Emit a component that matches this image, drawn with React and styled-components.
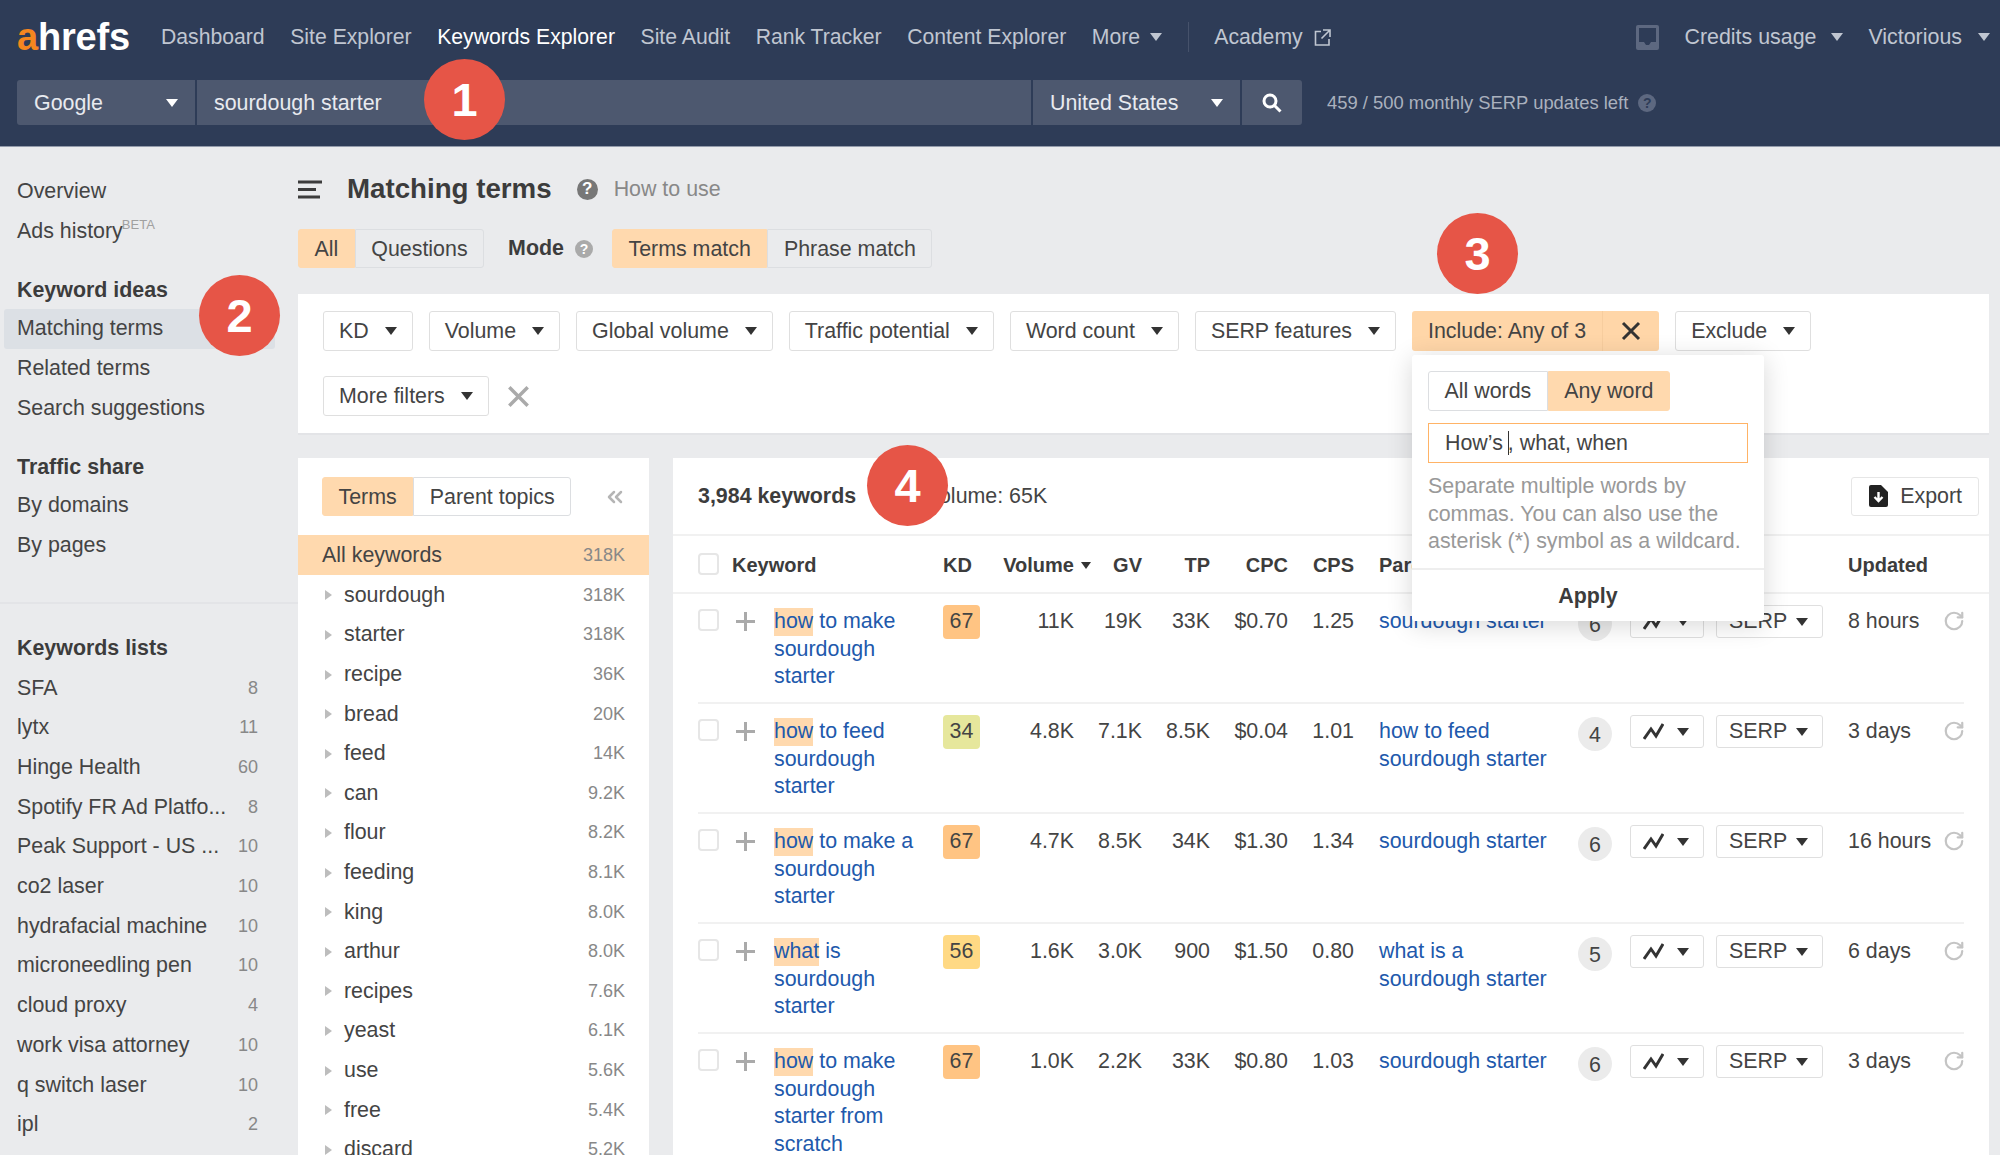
import React from "react";
import styled, { createGlobalStyle } from "styled-components";
import { ChevronsLeft, RotateCw } from "lucide-react";

const GlobalStyle = createGlobalStyle`
  html, body {
    margin: 0;
    padding: 0;
    background: #eaebed;
  }
  body {
    font-family: "Liberation Sans", Arial, sans-serif;
    font-size: 21.4px;
    color: #444;
  }
  * {
    box-sizing: border-box;
  }
`;

const Page = styled.div`
  position: relative;
  width: 2000px;
  height: 1155px;
  overflow: hidden;
  background: #eaebed;
`;

/* header */
const Header = styled.header`
  height: 147px;
  background: #2e3c57;
  border-bottom: 1px solid #939bab;
  padding: 0 10px 0 17px;
`;

const NavRow = styled.nav`
  height: 74px;
  margin-bottom: 6px;
  display: flex;
  align-items: center;
  gap: 25.6px;
  font-size: 21.2px;
`;

const Logo = styled.div`
  width: 118.4px;
  font-size: 38px;
  font-weight: 700;
  letter-spacing: -0.2px;
  color: #fff;
  line-height: 40px;
  span {
    color: #f5861f;
  }
`;

const NavLink = styled.span`
  display: flex;
  align-items: center;
  gap: ${({ $gap }) => $gap || 10}px;
  color: ${({ $active }) => ($active ? "#fff" : "#c0c6d1")};
  white-space: nowrap;
`;

const NavDivider = styled.div`
  width: 1px;
  height: 30px;
  background: #46526b;
`;

const NavRight = styled.div`
  margin-left: auto;
  display: flex;
  align-items: center;
  gap: 25px;
  font-size: 21.4px;
`;

const SearchRow = styled.div`
  display: flex;
  align-items: center;
  gap: 2px;
`;

const SearchCell = styled.div`
  height: 45px;
  display: flex;
  align-items: center;
  justify-content: space-between;
  padding: 1px ${({ $pad }) => $pad || 17}px 0;
  width: ${({ $w }) => ($w ? `${$w}px` : "auto")};
  background: #4d586f;
  color: #e8eaef;
  border-radius: ${({ $radius }) => $radius || "0"};
`;

const UpdatesNote = styled.div`
  display: flex;
  align-items: center;
  gap: 10px;
  margin-left: 23px;
  font-size: 18.400px;
  color: #aab1be;
`;

const Caret = styled.i`
  display: inline-block;
  flex: none;
  width: 0;
  height: 0;
  border-left: ${({ $size }) => $size || 6}px solid transparent;
  border-right: ${({ $size }) => $size || 6}px solid transparent;
  border-top: ${({ $size }) => ($size || 6) + 2}px solid ${({ $color }) => $color || "#333"};
  margin-right: ${({ $pull }) => $pull || 0}px;
`;

const HelpDot = styled.span`
  flex: none;
  display: inline-flex;
  align-items: center;
  justify-content: center;
  width: ${({ $size }) => $size || 18}px;
  height: ${({ $size }) => $size || 18}px;
  border-radius: 50%;
  background: ${({ $color }) => $color || "#aaa"};
  color: ${({ $text }) => $text || "#fff"};
  font-size: ${({ $size }) => ($size || 18) - 4}px;
  font-weight: 700;
`;

/* body layout */
const Body = styled.div`
  display: grid;
  grid-template-columns: 298px 1fr;
  height: 1008px;
`;

const Sidebar = styled.aside`
  padding-top: 25px;
`;

const SideItem = styled.div`
  height: ${({ $h }) => $h || 39.7}px;
  display: flex;
  align-items: center;
  justify-content: space-between;
  padding: 0 40px 0 ${({ $active }) => ($active ? 13 : 17)}px;
  margin-left: ${({ $active }) => ($active ? 4 : 0)}px;
  margin-right: ${({ $active }) => ($active ? 23 : 0)}px;
  background: ${({ $active }) => ($active ? "#dce0e5" : "transparent")};
  border-radius: 3px;
  white-space: nowrap;
`;

const SideHeading = styled(SideItem)`
  font-weight: 700;
  margin-top: ${({ $top }) => $top || 0}px;
  color: #3c3c3c;
`;

const Beta = styled.sup`
  font-size: 13px;
  color: #a0a0a0;
  align-self: flex-start;
  margin: -1px 0 0 -1px;
  line-height: 13px;
`;

const SideLabel = styled.span`
  display: flex;
`;

const SideCount = styled.span`
  font-size: 18px;
  color: #888;
`;

const SideDivider = styled.div`
  height: 2px;
  background: #e3e4e7;
  margin: 37px 0 25px;
`;

const Content = styled.main`
  padding: 22px 11px 0 0;
  min-width: 0;
`;

const TitleRow = styled.div`
  height: 40px;
  display: flex;
  align-items: center;
`;

const Title = styled.h1`
  margin: 0 25px 0 25px;
  font-size: 27.7px;
  font-weight: 700;
  color: #3c3c3c;
`;

const HowTo = styled.span`
  margin-left: 16px;
  color: #888;
`;

const ModeRow = styled.div`
  display: flex;
  align-items: center;
  height: 39px;
  margin-top: 20px;
`;

const ModeLabel = styled.b`
  margin: 0 11px 0 24px;
  color: #3c3c3c;
`;

const Segments = styled.div`
  display: flex;
  height: ${({ $h }) => $h || 39}px;
  margin-left: ${({ $left }) => $left || 0}px;
`;

const Segment = styled.div`
  display: flex;
  align-items: center;
  padding: 1px ${({ $pad }) => $pad || 15.5}px 0;
  border: 1px solid ${({ $active }) => ($active ? "#ffd9ae" : "#dcdee1")};
  background: ${({ $active, $plain }) => ($active ? "#ffd9ae" : $plain ? "#fff" : "transparent")};
  &:first-child {
    border-radius: 3px 0 0 3px;
  }
  &:last-child {
    border-radius: 0 3px 3px 0;
  }
`;

const FilterPanel = styled.section`
  position: relative;
  z-index: 2;
  margin-top: 26px;
  height: 141px;
  padding: 17px 25px;
  background: #fff;
  border-bottom: 2px solid #e3e4e7;
  display: flex;
  flex-wrap: wrap;
  align-items: center;
  align-content: flex-start;
  gap: 25px 16px;
`;

const FilterButton = styled.div`
  height: 40px;
  display: flex;
  align-items: center;
  gap: 16px;
  padding: 0 15px;
  background: #fff;
  border: 1px solid #dfdfdf;
  border-radius: 3px;
  white-space: nowrap;
`;

const ClearFilters = styled.span`
  display: flex;
  margin-left: 2px;
`;

const IncludeWrap = styled.div`
  position: relative;
`;

const IncludeButton = styled.div`
  height: 40px;
  display: flex;
  align-items: center;
  background: #ffd6a8;
  border-radius: 3px;
`;

const IncludeLabel = styled.span`
  padding: 0 16px;
  border-right: 1px solid #f7cd9e;
  line-height: 40px;
`;

const IncludeClose = styled.span`
  display: flex;
  padding: 0 18px;
`;

const Popover = styled.div`
  position: absolute;
  top: 44px;
  left: 0;
  width: 352px;
  height: 266px;
  background: #fff;
  border-radius: 3px;
  box-shadow: 0 4px 26px rgba(0, 0, 0, 0.16);
  z-index: 5;
`;

const PopTop = styled.div`
  padding: 16px 16px 0;
  height: 215px;
  border-bottom: 2px solid #eee;
`;

const PopInput = styled.div`
  margin-top: 12px;
  height: 40px;
  display: flex;
  align-items: center;
  padding-left: 16px;
  border: 1px solid #ffb366;
  white-space: pre;
`;

const Cursor = styled.i`
  display: inline-block;
  width: 1px;
  height: 24px;
  margin: 0 -1px 0 5px;
  background: #333;
`;

const PopHelp = styled.p`
  margin: 10px 0 0;
  line-height: 27.5px;
  color: #999;
  white-space: nowrap;
`;

const ApplyRow = styled.div`
  height: 51px;
  padding-top: 2px;
  display: flex;
  align-items: center;
  justify-content: center;
  font-weight: 700;
  color: #3c3c3c;
`;

const Panels = styled.div`
  margin-top: 23px;
  display: grid;
  grid-template-columns: 351px 1316px;
  gap: 24px;
  height: 697px;
`;

const TermsPanel = styled.section`
  background: #fff;
  padding-top: 19px;
  overflow: hidden;
`;

const TermsTop = styled.div`
  display: flex;
  align-items: center;
  justify-content: space-between;
  padding: 0 22px 0 24px;
  margin-bottom: 19px;
`;

const TermRow = styled.div`
  height: 39.6px;
  display: flex;
  align-items: center;
  justify-content: space-between;
  padding: 2px 24px 0;
  background: ${({ $active }) => ($active ? "#ffd9ae" : "transparent")};
`;

const TermName = styled.span`
  display: flex;
  align-items: center;
  gap: 12px;
  padding-left: 3px;
`;

const TermArrow = styled.i`
  width: 0;
  height: 0;
  border-top: 5px solid transparent;
  border-bottom: 5px solid transparent;
  border-left: 7px solid #bdbdbd;
`;

const TermCount = styled.span`
  font-size: 18px;
  color: #888;
`;

const TablePanel = styled.section`
  background: #fff;
  overflow: hidden;
`;

const TableTop = styled.div`
  height: 78px;
  display: flex;
  align-items: center;
  padding: 0 10px 0 25px;
  gap: 21px;
  border-bottom: 2px solid #f1f1f1;
`;

const Strong = styled.b`
  color: #3c3c3c;
`;

const ExportButton = styled(FilterButton)`
  margin-left: auto;
  height: 39px;
  gap: 12px;
  padding: 0 16px 0 17px;
  border-color: #e6e6e6;
`;

const columns = "38px 39px 168px 47px 84px 68px 68px 78px 66px 25px 199px 52px 86px 132px 97px 19px";

const HeadRow = styled.div`
  height: 58px;
  padding: 2px 25px 0;
  display: grid;
  grid-template-columns: ${columns};
  align-items: center;
  border-bottom: 2px solid #f1f1f1;
  font-size: 20px;
  font-weight: 700;
  color: #3c3c3c;
`;

const HeadCell = styled.div`
  grid-column: ${({ $col }) => $col};
  display: flex;
  align-items: center;
  justify-content: ${({ $right }) => ($right ? "flex-end" : "flex-start")};
  gap: 7px;
  margin-left: ${({ $pull }) => $pull || 0}px;
  white-space: nowrap;
`;

const DataRow = styled.div`
  min-height: 110px;
  margin: 0 25px;
  padding-top: 14px;
  display: grid;
  grid-template-columns: ${columns};
  align-items: start;
  align-content: start;
  line-height: 27.5px;
  border-bottom: 2px solid #f1f1f1;
`;

const CheckBox = styled.div`
  width: 21px;
  height: 22px;
  margin-top: ${({ $top }) => $top || 0}px;
  border: 2px solid #e6e6e6;
  border-radius: 4px;
  background: #fff;
`;

const PlusMark = styled.svg`
  margin-top: 4px;
`;

const Num = styled.div`
  grid-column: ${({ $col }) => $col};
  text-align: right;
`;

const KeywordLink = styled.div`
  margin-left: -1px;
  padding-right: 8px;
  color: #2159ac;
`;

const Mark = styled.span`
  display: inline-block;
  background: #ffd9ae;
`;

const KdBadge = styled.div`
  width: 37px;
  height: 34px;
  margin-top: -3px;
  display: flex;
  align-items: center;
  justify-content: center;
  border-radius: 4px;
  background: ${({ $color }) => $color};
  color: #444;
`;

const ParentLink = styled.div`
  grid-column: 11;
  max-width: 178px;
  color: #2159ac;
`;

const CountDot = styled.div`
  width: 34px;
  height: 34px;
  margin-top: -1px;
  display: flex;
  align-items: center;
  justify-content: center;
  border-radius: 50%;
  background: #ebebeb;
  padding-top: 3px;
`;

const SmallButton = styled.div`
  height: 33px;
  width: ${({ $w }) => $w}px;
  margin-top: -3px;
  display: flex;
  align-items: center;
  justify-content: space-between;
  padding: 0 14px 0 12px;
  border: 1px solid #dfdfdf;
  border-radius: 3px;
`;

const RefreshIcon = styled(RotateCw)`
  margin: 2px 0 0 -2px;
`;

const MarkerDot = styled.div`
  position: absolute;
  left: ${({ $x }) => $x}px;
  top: ${({ $y }) => $y}px;
  width: 81px;
  height: 81px;
  display: flex;
  align-items: center;
  justify-content: center;
  border-radius: 50%;
  background: #e65547;
  color: #fff;
  font-size: 47px;
  font-weight: 700;
  z-index: 10;
`;

const CloseIcon = ({ size = 20, color = "#333" }) => (
  <svg width={size} height={size} viewBox="0 0 20 20" fill="none" stroke={color} strokeWidth="3">
    <path d="M2 2 18 18M18 2 2 18" />
  </svg>
);

const PlusIcon = () => (
  <PlusMark width="19" height="19" viewBox="0 0 19 19" stroke="#aaa" strokeWidth="3">
    <path d="M9.5 0v19M0 9.5h19" />
  </PlusMark>
);

const TrendIcon = () => (
  <svg width="21" height="18" viewBox="0 0 21 18" fill="none" stroke="#333" strokeWidth="3">
    <path d="M1 16 8 6l5 7 7-12" />
  </svg>
);

const terms = [
  ["sourdough", "318K"], ["starter", "318K"], ["recipe", "36K"], ["bread", "20K"], ["feed", "14K"],
  ["can", "9.2K"], ["flour", "8.2K"], ["feeding", "8.1K"], ["king", "8.0K"], ["arthur", "8.0K"],
  ["recipes", "7.6K"], ["yeast", "6.1K"], ["use", "5.6K"], ["free", "5.4K"], ["discard", "5.2K"],
];

const lists = [
  ["SFA", 8], ["lytx", 11], ["Hinge Health", 60], ["Spotify FR Ad Platfo...", 8], ["Peak Support - US ...", 10],
  ["co2 laser", 10], ["hydrafacial machine", 10], ["microneedling pen", 10], ["cloud proxy", 4],
  ["work visa attorney", 10], ["q switch laser", 10], ["ipl", 2],
];

const filters = ["KD", "Volume", "Global volume", "Traffic potential", "Word count", "SERP features"];

const rows = [
  { mark: "how", rest: " to make sourdough starter", kd: 67, kdColor: "#ffc483", vals: ["11K", "19K", "33K", "$0.70", "1.25"], parent: "sourdough starter", count: 6, updated: "8 hours" },
  { mark: "how", rest: " to feed sourdough starter", kd: 34, kdColor: "#e6e79c", vals: ["4.8K", "7.1K", "8.5K", "$0.04", "1.01"], parent: "how to feed sourdough starter", count: 4, updated: "3 days" },
  { mark: "how", rest: " to make a sourdough starter", kd: 67, kdColor: "#ffc483", vals: ["4.7K", "8.5K", "34K", "$1.30", "1.34"], parent: "sourdough starter", count: 6, updated: "16 hours" },
  { mark: "what", rest: " is sourdough starter", kd: 56, kdColor: "#ffd984", vals: ["1.6K", "3.0K", "900", "$1.50", "0.80"], parent: "what is a sourdough starter", count: 5, updated: "6 days" },
  { mark: "how", rest: " to make sourdough starter from scratch", kd: 67, kdColor: "#ffc483", vals: ["1.0K", "2.2K", "33K", "$0.80", "1.03"], parent: "sourdough starter", count: 6, updated: "3 days" },
];

const App = () => {
  return (
    <Page>
      <GlobalStyle />
      <Header>
        <NavRow>
          <Logo><span>a</span>hrefs</Logo>
          <NavLink>Dashboard</NavLink>
          <NavLink>Site Explorer</NavLink>
          <NavLink $active>Keywords Explorer</NavLink>
          <NavLink>Site Audit</NavLink>
          <NavLink>Rank Tracker</NavLink>
          <NavLink>Content Explorer</NavLink>
          <NavLink>More <Caret $color="#c0c6d1" /></NavLink>
          <NavDivider />
          <NavLink $gap={11}>
            Academy
            <svg width="17" height="17" viewBox="0 0 17 17" fill="none" stroke="#c0c6d1" strokeWidth="1.6">
              <path d="M7 2.500H1.500v13.500H15v-6M9 1h7v7M16 1 7.500 9.500" />
            </svg>
          </NavLink>
          <NavRight>
            <svg width="23" height="25" viewBox="0 0 23 25">
              <rect width="23" height="25" rx="2" fill="#5d6880" />
              <path d="M3 3h17v14h-5l-2 3h-3l-2-3H3z" fill="#2e3c57" />
            </svg>
            <NavLink $gap={15}>Credits usage <Caret $color="#c0c6d1" /></NavLink>
            <NavLink $gap={16}>Victorious <Caret $color="#c0c6d1" /></NavLink>
          </NavRight>
        </NavRow>
        <SearchRow>
          <SearchCell $w={178} $radius="3px 0 0 3px">Google <Caret $color="#fff" /></SearchCell>
          <SearchCell $w={834}>sourdough starter</SearchCell>
          <SearchCell $w={207}>United States <Caret $color="#fff" /></SearchCell>
          <SearchCell $w={60} $pad={20} $radius="0 3px 3px 0">
            <svg width="20" height="20" viewBox="0 0 20 20" fill="none" stroke="#fff" strokeWidth="3">
              <circle cx="8" cy="8" r="6" />
              <path d="m12.500 12.500 6 6" />
            </svg>
          </SearchCell>
          <UpdatesNote>
            459 / 500 monthly SERP updates left
            <HelpDot $color="#5d6880" $text="#2e3c57">?</HelpDot>
          </UpdatesNote>
        </SearchRow>
      </Header>

      <Body>
        <Sidebar>
          <SideItem>Overview</SideItem>
          <SideItem><SideLabel>Ads history<Beta>BETA</Beta></SideLabel></SideItem>
          <SideHeading $top={20} $h={37.5}>Keyword ideas</SideHeading>
          <SideItem $active>Matching terms</SideItem>
          <SideItem>Related terms</SideItem>
          <SideItem>Search suggestions</SideItem>
          <SideHeading $top={22} $h={36}>Traffic share</SideHeading>
          <SideItem>By domains</SideItem>
          <SideItem>By pages</SideItem>
          <SideDivider />
          <SideHeading $h={39}>Keywords lists</SideHeading>
          {lists.map(([name, count]) => (
            <SideItem key={name}>
              {name}
              <SideCount>{count}</SideCount>
            </SideItem>
          ))}
        </Sidebar>

        <Content>
          <TitleRow>
            <svg width="24" height="19" viewBox="0 0 24 19" stroke="#3c3c3c" strokeWidth="3">
              <path d="M0 2h24M0 9.500h18M0 17h22" />
            </svg>
            <Title>Matching terms</Title>
            <HelpDot $size={21} $color="#777">?</HelpDot>
            <HowTo>How to use</HowTo>
          </TitleRow>

          <ModeRow>
            <Segments>
              <Segment $active>All</Segment>
              <Segment>Questions</Segment>
            </Segments>
            <ModeLabel>Mode</ModeLabel>
            <HelpDot>?</HelpDot>
            <Segments $left={19}>
              <Segment $active>Terms match</Segment>
              <Segment>Phrase match</Segment>
            </Segments>
          </ModeRow>

          <FilterPanel>
            {filters.map((name) => (
              <FilterButton key={name}>{name} <Caret /></FilterButton>
            ))}
            <IncludeWrap>
              <IncludeButton>
                <IncludeLabel>Include: Any of 3</IncludeLabel>
                <IncludeClose><CloseIcon /></IncludeClose>
              </IncludeButton>
              <Popover>
                <PopTop>
                  <Segments $h={40}>
                    <Segment $plain>All words</Segment>
                    <Segment $active>Any word</Segment>
                  </Segments>
                  <PopInput>How’s<Cursor />, what, when</PopInput>
                  <PopHelp>
                    Separate multiple words by<br />
                    commas. You can also use the<br />
                    asterisk (*) symbol as a wildcard.
                  </PopHelp>
                </PopTop>
                <ApplyRow>Apply</ApplyRow>
              </Popover>
            </IncludeWrap>
            <FilterButton>Exclude <Caret /></FilterButton>
            <FilterButton>More filters <Caret /></FilterButton>
            <ClearFilters><CloseIcon size={23} color="#aaa" /></ClearFilters>
          </FilterPanel>

          <Panels>
            <TermsPanel>
              <TermsTop>
                <Segments>
                  <Segment $active>Terms</Segment>
                  <Segment $plain>Parent topics</Segment>
                </Segments>
                <ChevronsLeft size={24} color="#b5b5b5" strokeWidth={2.5} />
              </TermsTop>
              <TermRow $active>
                All keywords
                <TermCount>318K</TermCount>
              </TermRow>
              {terms.map(([name, count]) => (
                <TermRow key={name}>
                  <TermName><TermArrow />{name}</TermName>
                  <TermCount>{count}</TermCount>
                </TermRow>
              ))}
            </TermsPanel>

            <TablePanel>
              <TableTop>
                <Strong>3,984 keywords</Strong>
                <span>Total volume: 65K</span>
                <ExportButton>
                  <svg width="19" height="22" viewBox="0 0 19 22">
                    <path d="M2 0h10l7 7v13a2 2 0 0 1-2 2H2a2 2 0 0 1-2-2V2a2 2 0 0 1 2-2z" fill="#222" />
                    <path d="M9.500 7v8M5.500 12l4 4 4-4" fill="none" stroke="#fff" strokeWidth="2.400" />
                  </svg>
                  Export
                </ExportButton>
              </TableTop>

              <HeadRow>
                <HeadCell $col={1}><CheckBox $top={-2} /></HeadCell>
                <HeadCell $col="2 / 4" $pull={-4}>Keyword</HeadCell>
                <HeadCell $col={4}>KD</HeadCell>
                <HeadCell $col={5} $right>Volume <Caret $size={5} $pull={-17} /></HeadCell>
                <HeadCell $col={6} $right>GV</HeadCell>
                <HeadCell $col={7} $right>TP</HeadCell>
                <HeadCell $col={8} $right>CPC</HeadCell>
                <HeadCell $col={9} $right>CPS</HeadCell>
                <HeadCell $col={11}>Parent topic</HeadCell>
                <HeadCell $col="15 / 17">Updated</HeadCell>
              </HeadRow>

              {rows.map((row) => (
                <DataRow key={row.mark + row.rest}>
                  <CheckBox $top={1} />
                  <PlusIcon />
                  <KeywordLink><Mark>{row.mark}</Mark>{row.rest}</KeywordLink>
                  <KdBadge $color={row.kdColor}>{row.kd}</KdBadge>
                  {row.vals.map((val, i) => (
                    <Num key={i} $col={5 + i}>{val}</Num>
                  ))}
                  <ParentLink>{row.parent}</ParentLink>
                  <CountDot>{row.count}</CountDot>
                  <SmallButton $w={74}><TrendIcon /><Caret /></SmallButton>
                  <SmallButton $w={107}>SERP <Caret /></SmallButton>
                  <div>{row.updated}</div>
                  <RefreshIcon size={22} color="#c4c4c4" strokeWidth={2.4} />
                </DataRow>
              ))}
            </TablePanel>
          </Panels>
        </Content>
      </Body>

      <MarkerDot $x={424} $y={59}>1</MarkerDot>
      <MarkerDot $x={199} $y={275}>2</MarkerDot>
      <MarkerDot $x={1437} $y={213}>3</MarkerDot>
      <MarkerDot $x={867} $y={445}>4</MarkerDot>
    </Page>
  );
};

export default App;
